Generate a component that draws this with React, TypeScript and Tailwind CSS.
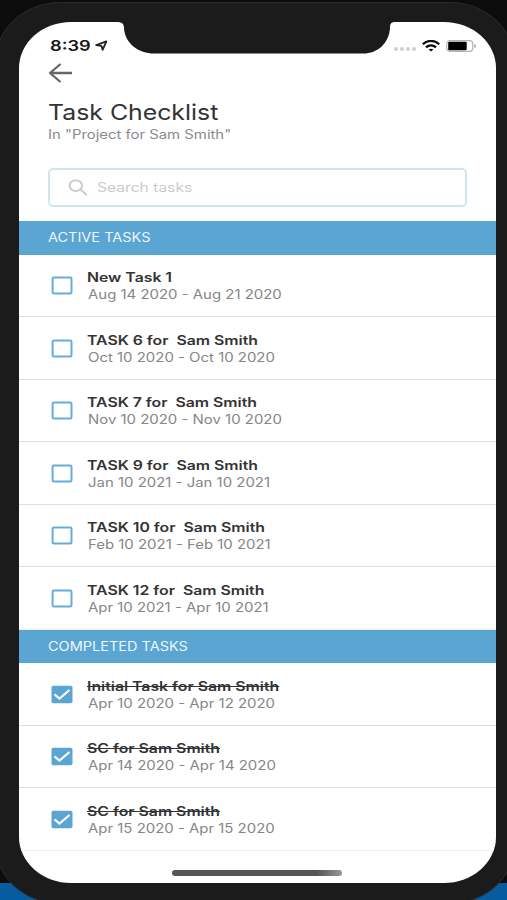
import clsx from "clsx";
import React from "react";

type Task = {
  title: string;
  dates: string;
  done?: boolean;
};

const activeTasks: Task[] = [
  { title: "New Task 1", dates: "Aug 14 2020 - Aug 21 2020" },
  { title: "TASK 6 for  Sam Smith", dates: "Oct 10 2020 - Oct 10 2020" },
  { title: "TASK 7 for  Sam Smith", dates: "Nov 10 2020 - Nov 10 2020" },
  { title: "TASK 9 for  Sam Smith", dates: "Jan 10 2021 - Jan 10 2021" },
  { title: "TASK 10 for  Sam Smith", dates: "Feb 10 2021 - Feb 10 2021" },
  { title: "TASK 12 for  Sam Smith", dates: "Apr 10 2021 - Apr 10 2021" },
];

const completedTasks: Task[] = [
  { title: "Initial Task for Sam Smith", dates: "Apr 10 2020 - Apr 12 2020", done: true },
  { title: "SC for Sam Smith", dates: "Apr 14 2020 - Apr 14 2020", done: true },
  { title: "SC for Sam Smith", dates: "Apr 15 2020 - Apr 15 2020", done: true },
];

const StatusBar = () => (
  <div className="flex h-8 items-end justify-between pl-[31px] pr-[19px]">
    <div className="flex items-center gap-[12px]">
      <span className="origin-left scale-x-[1.23] text-[14.8px] font-semibold leading-4 text-[#161616]">
        8:39
      </span>
      <svg width="13" height="12" viewBox="0 0 13 12" fill="none">
        <path d="M1.2 5.2 11.4 1.4 7.6 9.8 6.4 5.8Z" stroke="#222" strokeWidth="1.8" strokeLinejoin="round" />
      </svg>
    </div>
    <div className="flex items-center pb-[2px]">
      <div className="mr-[5.5px] mt-[6px] flex gap-[2px]">
        <span className="size-[4px] rounded-full bg-[#cfcfcf]" />
        <span className="size-[4px] rounded-full bg-[#cfcfcf]" />
        <span className="size-[4px] rounded-full bg-[#cfcfcf]" />
        <span className="size-[4px] rounded-full bg-[#cfcfcf]" />
      </div>
      <svg width="18" height="12" viewBox="0 0 18 12" fill="none" stroke="#0a0a0a" strokeWidth="2.3">
        <path d="M.8 4.3C5.4-.2 12.6-.2 17.2 4.3" />
        <path d="M4 7.3c2.8-2.7 7.2-2.7 10 0" />
        <path d="m6.6 9.5 2.4 2 2.4-2c-1.4-1-3.4-1-4.8 0Z" fill="#0a0a0a" stroke="none" />
      </svg>
      <svg className="ml-[6px]" width="31" height="12" viewBox="0 0 31 12">
        <rect x=".7" y=".7" width="26" height="10.6" rx="3" fill="none" stroke="#b5b5b5" strokeWidth="1.2" />
        <rect x="2.2" y="1.8" width="18.5" height="8.4" rx="1" fill="#000" />
        <path d="M28.3 4c2.2.6 2.2 3.400 0 4Z" fill="#a5a5a5" />
      </svg>
    </div>
  </div>
);

const Checkbox = ({ done }: { done?: boolean }) => (
  <svg className="mt-[1px] shrink-0" width="22" height="19" viewBox="0 0 22 19" fill="none">
    {done ? (
      <>
        <rect x=".5" y=".7" width="21" height="17.6" rx="1.8" fill="#5aa5d2" />
        <path d="m3.5 9.3 5 4.3L18.5 5" stroke="#fff" strokeWidth="2.2" />
      </>
    ) : (
      <rect x="1.6" y="1.6" width="18.9" height="15.8" rx="1.2" stroke="#66aeda" strokeWidth="2" />
    )}
  </svg>
);

const TaskRow = ({ title, dates, done }: Task) => (
  <li className="flex h-[62.5px] items-center gap-[15px] border-b border-[#dedede] pl-[31.5px]">
    <Checkbox done={done} />
    <div className="flex flex-col items-start whitespace-pre pt-[1.5px]">
      <span
        className={clsx(
          "-ml-[0.5px] origin-left scale-x-[1.235] text-[12.8px] font-semibold leading-[17px] text-[#333]",
          done && "line-through"
        )}
      >
        {title}
      </span>
      <span className="origin-left scale-x-[1.195] text-[12.5px] leading-[17px] text-[#868686]">
        {dates}
      </span>
    </div>
  </li>
);

const SectionHeader = ({ label }: { label: string }) => (
  <h2 className="flex h-[33.5px] items-center bg-[#5aa5d2] pl-[29px] pt-[1.5px] text-[12.5px] text-[#eef7fc]">
    <span className="origin-left scale-x-[1.16]">{label}</span>
  </h2>
);

const TaskList = ({ tasks }: { tasks: Task[] }) => (
  <ul className="[&>li:last-child]:border-[#efefef]">
    {tasks.map((task) => (
      <TaskRow key={task.dates} {...task} />
    ))}
  </ul>
);

const App = () => {
  return (
    <div className="h-[900px] w-[507px] overflow-hidden bg-linear-to-b from-[#0c0c0c] from-[883px] to-[#075c9f] to-[883px] font-['Inter','Liberation_Sans',sans-serif]">
      <div className="relative top-[2px] -ml-[6px] h-[902px] w-[522px] rounded-[66px/62px] border border-[#2b2b2b] bg-[#1b1b1b] pl-[24px] pt-[18.5px]">
        <div className="relative flex h-[861.5px] w-[476.5px] flex-col overflow-hidden rounded-[52px/46px] bg-white">
          <svg className="absolute left-[98px] top-0" width="278" height="32" viewBox="0 0 278 32">
            <path d="M0 0h278c-4 0-5 2-5 6-1 15-12 25.5-27 25.5H37C22 31.5 8 22 7 6 7 2 5 0 0 0Z" fill="#1b1b1b" />
          </svg>
          <StatusBar />
          <header className="px-[29px] pt-[9.5px]">
            <svg width="24" height="20" viewBox="0 0 24 20" fill="none" stroke="#666" strokeWidth="2.3">
              <path d="M24 10H2M12.5 1 2 10l10.5 9" strokeLinejoin="round" />
            </svg>
            <h1 className="mt-[14.5px] w-max origin-left scale-x-[1.15] text-[21.6px] leading-[28px] text-[#333]">
              Task Checklist
            </h1>
            <p className="w-max origin-left scale-x-[1.2] pt-[1px] text-[12.4px] leading-[15px] text-[#8b8b8b]">
              In "Project for Sam Smith"
            </p>
            <div className="mt-[26px] flex h-[39px] w-[419px] items-center rounded-[5px] border-2 border-[#cfe6f1] pl-[18px]">
              <svg width="20" height="17" viewBox="0 0 20 17" fill="none" stroke="#cbcbcb" strokeWidth="2">
                <ellipse cx="7.8" cy="6.6" rx="6.3" ry="5.4" />
                <path d="m12.5 10.5 6.3 5.5" />
              </svg>
              <span className="ml-[8.5px] origin-left scale-x-[1.22] pt-[1.5px] text-[12.8px] text-[#cbcbcb]">
                Search tasks
              </span>
            </div>
          </header>
          <main className="mt-[14.5px]">
            <SectionHeader label="ACTIVE TASKS" />
            <TaskList tasks={activeTasks} />
            <SectionHeader label="COMPLETED TASKS" />
            <TaskList tasks={completedTasks} />
          </main>
          <div className="ml-[153px] mt-[19.5px] h-[5.5px] w-[170px] shrink-0 rounded-full bg-linear-to-r from-[#555] from-85% to-[#999]" />
        </div>
      </div>
    </div>
  );
};

export default App;
